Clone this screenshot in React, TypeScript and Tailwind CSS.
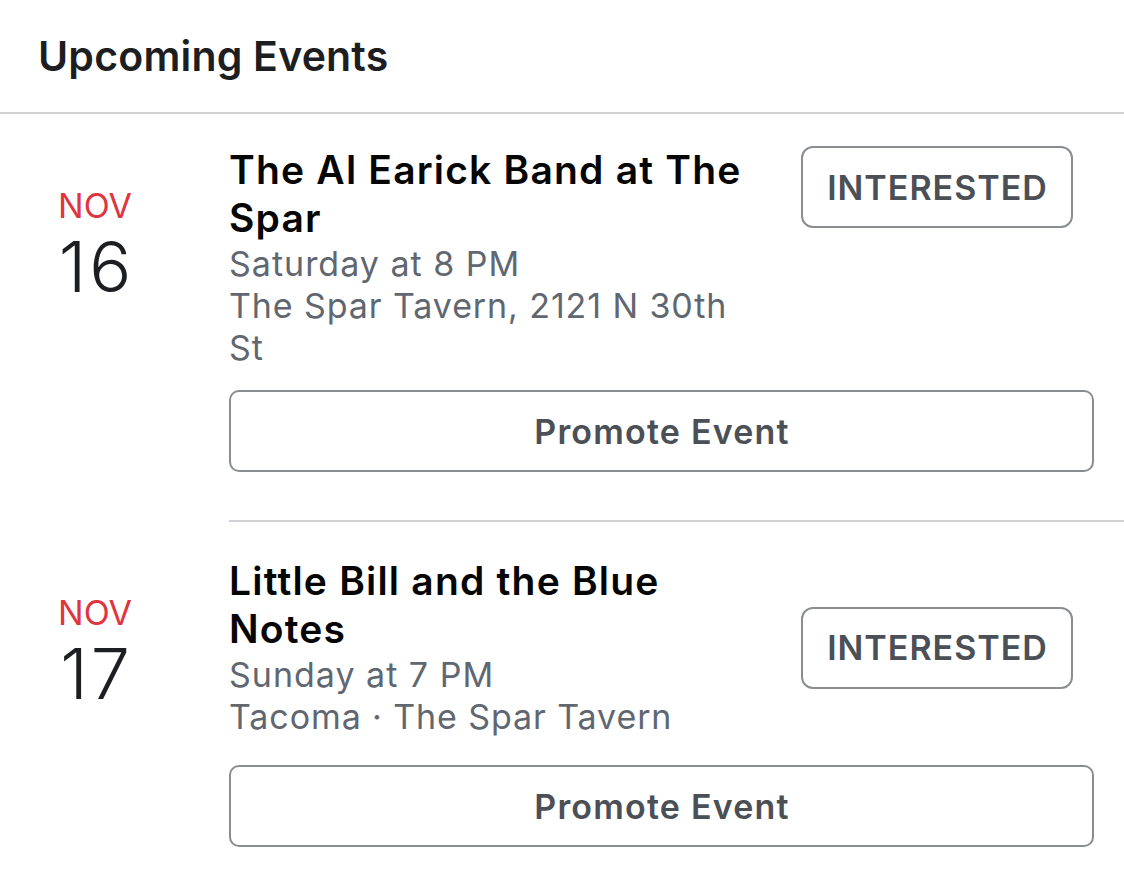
import React from "react";

type EventItem = {
  id: string;
  month: string;
  day: string;
  title: string;
  when: string;
  where: string;
  centerAction?: boolean;
  rowTop: string;
  dateTop: string;
  promoteTop: string;
};

const EVENTS: EventItem[] = [
  {
    id: "al-earick",
    month: "NOV",
    day: "16",
    title: "The Al Earick Band at The Spar",
    when: "Saturday at 8 PM",
    where: "The Spar Tavern, 2121 N 30th St",
    rowTop: "pt-[32px]",
    dateTop: "pt-[40px]",
    promoteTop: "mt-[21px]",
  },
  {
    id: "little-bill",
    month: "NOV",
    day: "17",
    title: "Little Bill and the Blue Notes",
    when: "Sunday at 7 PM",
    where: "Tacoma · The Spar Tavern",
    centerAction: true,
    rowTop: "pt-[35px]",
    dateTop: "pt-[36px]",
    promoteTop: "mt-[27px]",
  },
];

export default function App() {
  return (
    <div className="min-h-screen bg-white font-['Inter','Noto_Sans',sans-serif] antialiased">
      <header className="h-[114px] border-b-2 border-[#cfd1d4] pl-[38px] pt-[31px]">
        <h1 className="text-[41px] font-semibold leading-[50px] tracking-[0.2px] text-[#1c1e21]">Upcoming Events</h1>
      </header>

      <div>
        {EVENTS.map((event, index) => (
          <EventRow key={event.id} event={event} last={index === EVENTS.length - 1} />
        ))}
      </div>
    </div>
  );
}

function EventRow({ event, last }: { event: EventItem; last: boolean }) {
  return (
    <section className={`flex ${event.rowTop}`}>
      <div className={`w-[190px] shrink-0 ${event.dateTop} text-center`}>
        <p className="text-[34px] leading-[40px] text-[#e0353f]">{event.month}</p>
        <p className="mt-[6px] pl-[3px] text-[70px] font-light leading-[70px] tracking-[3px] text-[#1c1e21]">{event.day}</p>
      </div>

      <div className={`ml-[39px] flex-1 ${last ? "" : "border-b-2 border-[#cfd1d4] pb-[48px]"}`}>
        <div className={`flex ${event.centerAction ? "items-center" : "items-start"} pr-[51px]`}>
          <div className="w-[532px]">
            <h2 className="text-[39px] font-semibold leading-[48px] tracking-[1.2px] text-[#050505]">{event.title}</h2>
            <p className="mt-[1px] text-[34px] leading-[42px] tracking-[1px] text-[#606770]">{event.when}</p>
            <p className="text-[34px] leading-[42px] tracking-[0.9px] text-[#606770]">{event.where}</p>
          </div>
          <button className="ml-auto h-[82px] w-[272px] rounded-[12px] border-2 border-[#8a8d91] pl-[1px] text-[34px] font-semibold tracking-[1px] text-[#4b4f56]">
            INTERESTED
          </button>
        </div>

        <div className="pr-[30px]">
          <button
            className={`${event.promoteTop} h-[82px] w-full rounded-[10px] border-2 border-[#8a8d91] pl-[1px] text-[34px] font-semibold tracking-[1.2px] text-[#4b4f56]`}
          >
            Promote Event
          </button>
        </div>
      </div>
    </section>
  );
}
